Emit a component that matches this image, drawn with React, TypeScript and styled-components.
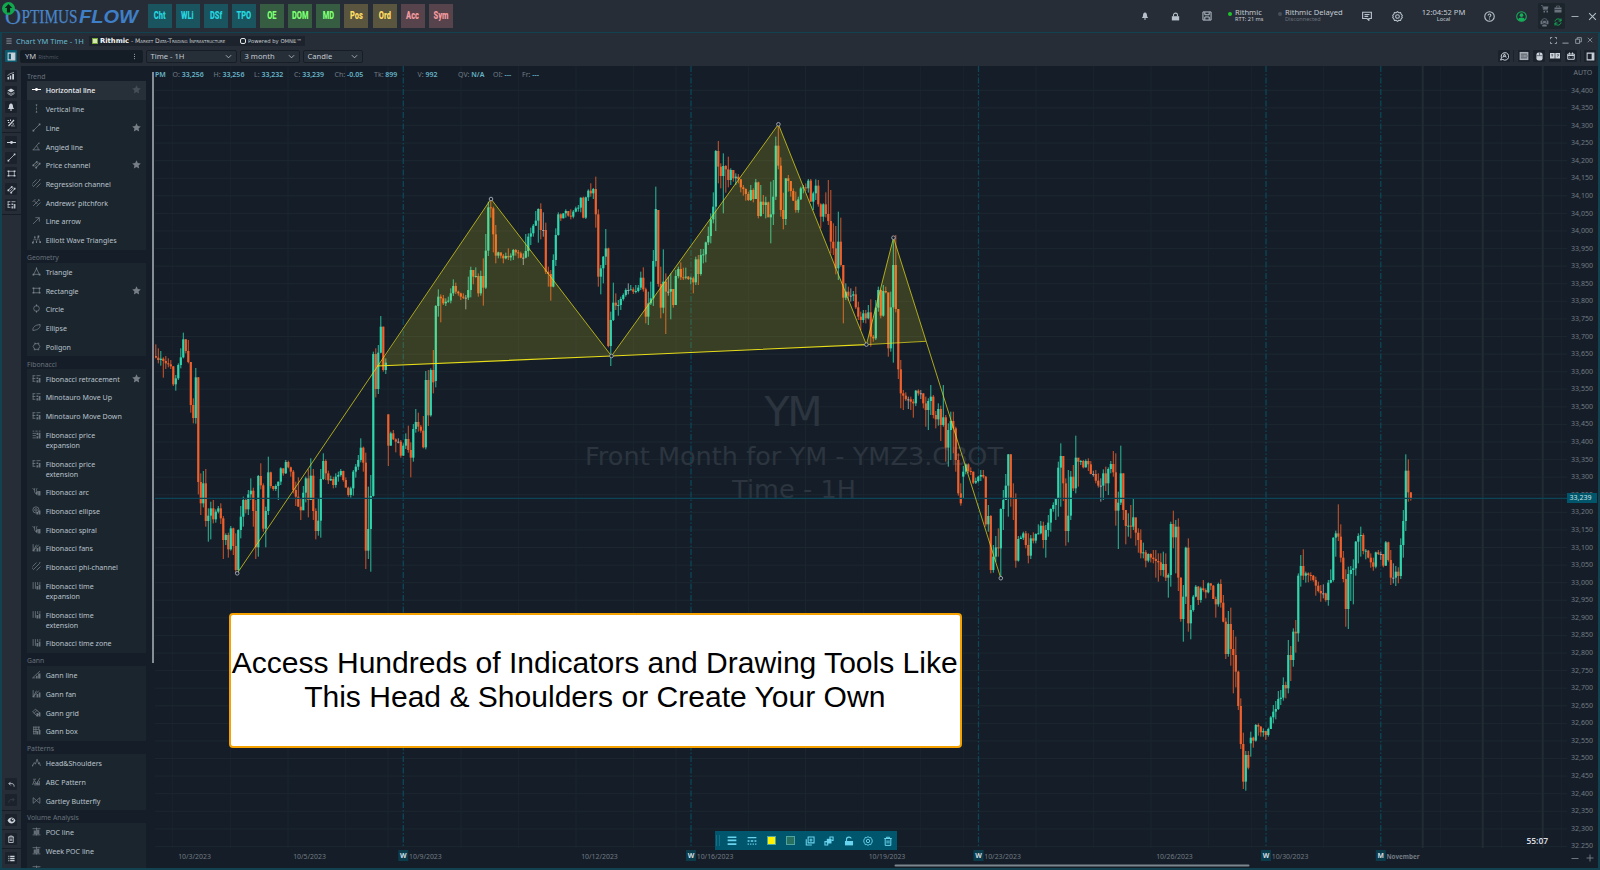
import React from 'react';
import styled, { createGlobalStyle } from 'styled-components';

type Bar = [number, number, number];

interface Block {
  top: number;
  open: number;
  bars: Bar[];
}

// Each bar is [close, high, low], in thirds of a pixel below the block's top.
// A bar opens where the previous one closed.
const BLOCKS: Block[] = [
  {
    top: 300,
    open: 168,
    bars: [
      [173,133,175],[180,145,190],[176,153,197],[183,172,233],[190,168,207],[193,175,202],[199,180,207],[253,198,258],
      [235,225,272],[195,190,240],[172,145,205],[118,98,175],[153,117,160],[186,120,190],[315,186,338],[354,295,370],
      [232,204,371],[546,231,583],[610,520,645],[550,513,622],[663,507,680],[647,625,725],[625,605,718],[658,600,670],
      [635,628,668],[625,618,640],[655,610,672],[720,648,777],[705,700,735],[748,698,773],[685,678,752],[738,683,765],
      [810,700,822],[690,688,815],[650,618,715],[600,590,680],[628,595,640],[583,570,645],[572,535,600],[633,563,680],
      [742,600,777],[528,525,770],[556,490,568],[686,550,695],[633,620,742],[517,470,645],[558,515,565],[567,558,572],
      [558,553,573],[545,545,600],[505,502,555],[520,505,527],[486,480,522],[502,482,505],[515,500,530],[570,510,580],
      [590,545,618],[620,532,620],[631,597,660],[578,558,630],[535,530,607],[600,508,652],[527,475,600],[633,507,660],
      [693,625,718],[662,594,707],[537,507,713],[483,460,540],[520,478,540],[541,512,552],[537,527,543],[555,530,565],
      [530,520,563],[525,515,545],[513,507,530],[540,512,545],[563,532,560],[585,560,590],[565,560,593],[515,510,587],
      [500,492,533],[480,465,510],[443,415,487],[488,440,515],[752,458,807],[687,560,777],[588,525,815],[162,155,590],
      [267,145,292],[158,135,282],[80,48,160],[210,80,215],[188,175,222],
    ],
  },
  {
    top: 300,
    open: 343,
    bars: [
      [437,343,498],[400,395,437],[418,390,420],[425,415,457],[425,415,430],[467,420,473],[437,430,468],[417,400,447],
      [450,377,458],[473,427,532],[387,372,485],[366,327,398],[380,338,395],[392,375,398],[442,348,445],[240,213,448],
      [346,210,378],[210,205,350],[247,150,280],
    ],
  },
  {
    top: 150,
    open: 693,
    bars: [
      [468,465,712],[440,418,500],[445,433,517],[460,435,465],[455,445,468],[452,440,458],[430,415,460],[408,388,438],
      [425,398,432],[430,422,437],[440,428,450],[443,430,447],[443,435,478],[420,380,450],[360,350,442],[380,360,403],
      [378,352,383],[430,370,440],[378,362,437],[413,325,467],[302,252,417],[172,155,318],[175,148,203],[253,170,307],
      [317,225,340],[307,305,325],[317,310,325],[325,312,340],[318,308,328],[322,295,330],[317,310,332],[300,297,330],
      [307,297,317],[310,300,325],[323,305,325],[323,310,345],[303,252,325],[260,250,320],[250,233,285],[227,222,260],
      [212,183,228],[177,175,278],[240,160,268],[240,187,260],[365,218,372],[372,350,410],[410,360,452],[330,313,412],
      [255,235,348],[193,187,257],[205,190,213],[190,190,205],[183,178,203],[197,185,200],[200,178,208],[185,180,205],
      [175,170,187],[173,165,185],[143,142,187],[203,140,205],[142,140,207],[122,118,153],[130,100,140],[117,114,147],
      [193,80,233],[380,178,410],[355,345,433],[320,318,400],[295,237,345],[588,293,592],[510,485,648],[458,398,513],
      [467,430,480],[465,450,497],[447,440,480],[435,430,452],[420,415,440],[420,400,433],[418,405,420],[425,412,432],
      [423,405,430],[413,405,427],[383,365,420],[418,352,425],[500,413,520],[460,425,525],[445,395,465],[333,300,468],
      [177,110,350],
    ],
  },
  {
    top: 100,
    open: 330,
    bars: [
      [552,330,560],[623,500,655],[545,448,640],[575,520,702],[575,530,587],[567,520,658],[615,568,623],[528,510,593],
      [507,500,535],[532,487,540],[533,503,540],[530,503,538],[537,528,540],[535,530,553],[547,530,580],[478,470,555],
      [522,465,555],[465,447,527],[463,447,490],[427,425,487],[408,380,435],[358,340,430],[320,277,370],[153,150,393],
      [200,123,250],[228,190,265],[198,160,340],[208,195,278],[240,170,262],[210,205,255],[235,210,245],[230,220,255],
      [238,222,250],[262,237,277],[267,255,287],[282,265,302],[300,275,303],[270,255,303],[297,265,307],[247,237,297],
      [348,245,355],[305,255,350],[315,285,342],[307,290,355],[352,305,350],[343,245,430],[290,240,375],[137,110,300],
      [197,78,208],[330,172,350],[357,278,388],[235,235,375],[243,225,275],[273,263,290],[302,265,303],[330,275,338],
      [298,290,338],[265,260,300],[262,255,280],[265,250,273],[242,237,278],[305,237,305],[280,275,330],[257,238,300],
      [313,240,320],[350,310,385],[313,310,365],[342,277,352],[363,240,375],[425,270,460],[445,370,465],[505,378,523],
      [425,335,540],[495,353,500],[593,495,670],[575,550,600],[587,560,602],[587,565,605],[583,573,603],[622,560,627],
      [650,605,660],[660,635,690],[640,630,668],[655,630,670],[637,615,658],[710,598,740],[715,705,725],[623,600,720],
      [570,560,635],[647,568,655],[573,555,650],[577,560,580],[745,580,770],[622,575,755],[495,413,788],[627,405,637],
      [808,627,837],
    ],
  },
  {
    top: 330,
    open: 118,
    bars: [
      [190,90,235],[197,180,240],[208,187,213],[208,200,237],[215,200,240],[220,207,263],[182,180,228],[190,178,197],
      [190,180,207],[220,190,235],[240,200,290],[213,205,300],[200,165,255],[255,195,265],[268,243,295],[237,220,287],
      [285,227,333],[262,165,290],[353,255,395],[300,280,410],[273,245,390],[295,245,370],[390,290,425],[490,370,497],
      [520,460,527],
    ],
  },
  {
    top: 330,
    open: 440,
    bars: [
      [425,408,507],[403,400,433],[423,400,430],[425,412,435],[458,425,462],[453,443,462],[440,437,457],[435,420,453],
      [440,420,445],[583,438,590],[558,525,605],[720,555,730],[680,645,728],[652,618,695],[655,595,680],[537,535,745],
      [510,480,600],[467,432,510],[373,372,560],[503,372,530],[507,460,570],[692,490,713],[627,618,695],[623,617,627],
      [610,605,630],[645,603,655],[677,610,700],[625,615,687],[632,607,640],[612,610,640],[610,583,613],[587,573,613],
      [630,575,655],[600,585,683],[578,555,620],[537,535,605],[525,517,545],[507,505,570],[413,395,560],[378,340,530],
      [460,378,513],[603,445,647],[557,420,637],[440,423,570],[475,405,483],[383,317,490],[395,390,470],[393,390,405],
      [412,390,415],[393,388,413],[403,385,423],[432,393,433],[432,422,440],[452,420,460],[467,430,473],[467,445,515],
      [430,418,510],[460,410,483],[417,412,495],[402,393,430],[427,363,440],[542,370,587],[518,485,657],[430,347,525],
      [540,430,570],[588,545,643],[587,550,620],[590,525,625],[562,507,600],
    ],
  },
  {
    top: 430,
    open: 262,
    bars: [
      [308,272,347],[330,295,368],[370,298,385],[367,338,385],[392,360,412],[372,370,397],[383,370,397],[387,360,400],
      [393,360,443],[397,370,455],[420,370,437],[402,365,440],[443,370,453],[435,430,503],[282,275,470],[322,242,355],
      [290,270,430],[443,265,483],[567,442,575],[500,465,635],[353,350,522],[580,325,605],[540,525,628],[500,495,545],
      [470,465,502],[510,468,525],[475,470,518],[480,450,485],[487,475,505],[460,457,490],[467,460,480],[507,465,507],
      [523,500,563],[462,458,530],[518,448,533],[575,495,577],[672,563,687],[582,543,680],[657,533,707],[675,600,790],
      [725,620,772],[828,722,840],[942,805,957],[1055,908,1077],[975,963,1082],[1013,963,1018],
    ],
  },
  {
    top: 430,
    open: 940,
    bars: [
      [923,905,980],[932,920,953],[885,882,935],[890,880,917],[907,888,920],[903,895,920],[915,903,930],[897,893,920],
      [862,858,897],[845,825,880],[837,813,868],[807,783,840],[803,780,825],[765,742,812],[775,755,805],[675,630,790],
      [690,648,753],[605,595,710],[610,570,668],[437,430,635],[408,375,470],[437,358,450],[430,425,458],[435,427,457],
      [437,427,452],[450,435,455],[467,440,497],[483,455,487],[490,465,515],[490,463,505],[510,488,515],[458,450,527],
      [450,418,460],[323,322,455],[310,302,380],[320,223,333],[383,283,397],[447,363,457],[537,418,590],[432,410,597],
      [420,408,513],[415,388,523],[335,333,437],[318,310,400],[315,290,380],[363,310,373],[362,357,388],[383,360,385],
      [397,370,413],[410,383,422],[367,365,415],[372,360,375],[372,365,390],[407,375,412],[337,333,408],[390,335,395],
      [443,360,465],[443,400,460],[425,408,468],[438,412,460],[345,325,447],[273,240,383],[122,73,303],[187,88,215],
      [205,187,212],
    ],
  },
];

const FIRST_BAR_X = 155.8;
const BAR_STEP = 2.5;
const PRICE_STEP_PX = 17.585;
const TOP_PRICE = 34400;
const TOP_PRICE_Y = 90.3;

const UP = '#2fd6ae';
const DOWN = '#f0602c';
const FLAT = '#a3a9ad';

const UI_FONT = '"Noto Sans", "Open Sans", sans-serif';

const candles = (() => {
  let index = 0;
  return BLOCKS.flatMap(({ top, open, bars }) => {
    let previous = open;
    return bars.map(([close, high, low]) => {
      const from = previous;
      previous = close;
      const color = close > from ? DOWN : close < from ? UP : FLAT;
      return {
        x: FIRST_BAR_X + BAR_STEP * index++,
        bodyTop: top + Math.min(from, close) / 3,
        bodyHeight: Math.max(Math.abs(close - from) / 3, 1),
        high: top + high / 3,
        low: top + low / 3,
        color,
      };
    });
  });
})();

const prices = Array.from({ length: 44 }, (_, i) => TOP_PRICE - i * 50);

const GlobalStyle = createGlobalStyle`
  * {
    box-sizing: border-box;
  }

  body {
    margin: 0;
    overflow: hidden;
    background: #262d37;
  }
`;

/* ---------- icons ---------- */

const ICONS: Record<string, React.ReactNode> = {
  hlineDot: (
    <>
      <path d="M0 8h16" strokeWidth="1.8" />
      <circle cx="8" cy="8" r="2.6" fill="currentColor" stroke="none" />
    </>
  ),
  vline: <path d="M8 1v3M8 6v4M8 12v3M6.5 1.5h3M6.5 14.5h3" />,
  line: (
    <>
      <path d="M3 13L13 3" />
      <path d="M1 12h3v3H1zM12 1h3v3h-3z" fill="currentColor" stroke="none" />
    </>
  ),
  angled: <path d="M1 14h13M2 14L12 2M8 7c2 1 3 4 3 7M11 2h3" />,
  channel: (
    <>
      <path d="M2 9.500L8.500 3M7 13.500l7-7" strokeWidth="1.700" />
      <path d="M1 8h3v3H1zM7 2h3v3H7zM6 12h3v3H6zM12 5h3v3h-3z" fill="currentColor" stroke="none" />
      <path d="M4.500 11.500l7-7" strokeWidth="1" />
    </>
  ),
  regression: <path d="M1 8L8 1M2 14L14 2M8 15l7-7M1 10v2M13 1h2" />,
  pitchfork: <path d="M1 7l5-5M2 14L13 3M8 15l7-7M4 5l6 6M11 2l3 3" />,
  arrow: <path d="M2 14L13 3M6 3h7v7" />,
  elliott: (
    <>
      <path d="M2 13l3-9 3 8 3-9 3 9" strokeDasharray="3 1" />
      <path d="M0 12h3v3H0zM4 2h2v3H4zM7 11h2v3H7zM10 1h3v3h-3zM13 11h3v3h-3z" fill="currentColor" stroke="none" />
    </>
  ),
  triangle: (
    <>
      <path d="M8 3L3 13h10z" />
      <path d="M7 1h2v3H7zM1 12h3v3H1zM12 12h3v3h-3z" fill="currentColor" stroke="none" />
    </>
  ),
  rect: (
    <>
      <path d="M3 4h10v8H3z" />
      <path d="M1 2.500h3v3H1zM12 2.500h3v3h-3zM1 10.500h3v3H1zM12 10.500h3v3h-3z" fill="currentColor" stroke="none" />
    </>
  ),
  circle: (
    <>
      <circle cx="8" cy="8" r="5" />
      <path d="M7 1h2v3H7zM7 12h2v3H7z" fill="currentColor" stroke="none" />
    </>
  ),
  ellipse: <path d="M2 13c-2-4 3-10 12-10 2 4-3 10-12 10zM1 13h2M13 3h2" />,
  polygon: <path d="M5 3h6l3 5-3 5H5L2 8zM4 2h2v2M10 2h2v2M4 12v2h2M12 12v2h-2" />,
  fib: (
    <>
      <path d="M1 3h5M8 3h7M1 8h5M1 13h5M2 3v10" />
      <path d="M8 6h3v3H8zM8 11h3v4H8zM12 7h3v8h-3z" fill="currentColor" stroke="none" opacity=".85" />
    </>
  ),
  fibTop: (
    <>
      <path d="M1 2h3M6 2h4M12 2h3M1 6h6M1 10h6M1 14h6" />
      <path d="M8 5h3v4H8zM8 11h3v4H8zM12 5h3v10h-3z" fill="currentColor" stroke="none" opacity=".85" />
    </>
  ),
  fibArc: (
    <>
      <path d="M1 2l4 4M5 2c-2 5 0 10 5 12M9 2c-2 3-1 6 2 8" />
      <path d="M7 8h3v5H7zM11 7h4v8h-4z" fill="currentColor" stroke="none" opacity=".85" />
    </>
  ),
  fibEllipse: (
    <>
      <circle cx="7" cy="7" r="5.5" />
      <circle cx="7" cy="7" r="2.2" />
      <path d="M8 10h3v5H8zM12 8h3v7h-3z" fill="currentColor" stroke="none" opacity=".85" />
    </>
  ),
  fibFan: (
    <>
      <path d="M2 2v12M2 14L8 3M2 14l10-11M1 14h5" />
      <path d="M8 9h3v6H8zM12 6h3v9h-3z" fill="currentColor" stroke="none" opacity=".85" />
    </>
  ),
  fibTime: (
    <>
      <path d="M2 2v12M6 2v12M10 2v5M14 2v3" />
      <path d="M8 9h3v6H8zM12 6h3v9h-3z" fill="currentColor" stroke="none" opacity=".85" />
    </>
  ),
  gannLine: (
    <>
      <path d="M1 14L14 2M1 14h5" />
      <path d="M7 10h3v5H7zM11 6h4v9h-4z" fill="currentColor" stroke="none" opacity=".85" />
    </>
  ),
  gannGrid: (
    <>
      <path d="M1 7l5-5 8 7-5 5zM4 9l5-5" />
      <path d="M8 9h3v6H8zM12 8h3v7h-3z" fill="currentColor" stroke="none" opacity=".85" />
    </>
  ),
  gannBox: (
    <>
      <path d="M2 2h12M2 6h12M2 10h6M2 14h5M3 1v13M7 1v13M12 1v5" />
      <path d="M8 9h3v6H8zM12 7h3v8h-3z" fill="currentColor" stroke="none" opacity=".85" />
    </>
  ),
  head: <path d="M1 14l3-6 2 3 3-9 3 9 1-3 2 6M1 12v3" />,
  abc: <path d="M1 14l3-8 4 6 6-10M2 4h5M10 8v6M13 7v7M3 12h10M4 14h10" />,
  gartley: <path d="M2 13V3l6 5 6-5v10L8 8z" />,
  poc: (
    <>
      <path d="M1 14h14M1 3h14M8 1v14" />
      <path d="M3 6h4v7H3zM9 5h4v8H9z" fill="currentColor" stroke="none" opacity=".8" />
    </>
  ),
  bars: (
    <>
      <path d="M1 10h3v5H1zM5.5 7h3v8h-3zM10.500 4h3.500v11h-3.500z" fill="currentColor" stroke="none" />
      <path d="M1 7l6-4 7-2" />
    </>
  ),
  layers: (
    <>
      <path d="M8 1l7 4-7 4-7-4z" fill="currentColor" stroke="none" />
      <path d="M1 8.5l7 4 7-4M1 11l7 4 7-4" />
    </>
  ),
  bell: <path d="M8 1c-3 0-4 3-4 6 0 3-2 3-2 5h12c0-2-2-2-2-5 0-3-1-6-4-6zM6 13h4v2H6z" fill="currentColor" stroke="none" />,
  wand: (
    <>
      <path d="M3 14L14 2" strokeWidth="2.400" />
      <path d="M1 2h3v2H1zM6 1h2v3H6zM2 6h3v2H2zM11 9h3v2h-3zM9 12h2v3H9zM13 13h2v2h-2z" fill="currentColor" stroke="none" />
    </>
  ),
  undo: <path d="M6 2L2 6l4 4M2 6h7c4 0 5 3 5 7" strokeWidth="1.8" />,
  redo: <path d="M10 2l4 4-4 4M14 6H7c-4 0-5 3-5 7" strokeWidth="1.8" />,
  eye: (
    <>
      <path d="M1 8c3-7 11-7 14 0-3 7-11 7-14 0z" fill="currentColor" stroke="none" />
      <circle cx="9" cy="7" r="3" fill="#262d37" stroke="none" />
      <circle cx="10" cy="6" r="1.3" fill="currentColor" stroke="none" />
    </>
  ),
  trash: <path d="M2 4h12M5.500 4V2h5v2M3.500 4v11h9V4M6.500 7v5M9.500 7v5" strokeWidth="1.6" />,
  list: <path d="M1 3h2M1 8h2M1 13h2M5 3h10M5 8h10M5 13h10" strokeWidth="3" />,
  lock: (
    <>
      <path d="M1.500 8h13v7h-13z" fill="currentColor" stroke="none" />
      <path d="M4 8V5c0-4 7-4 7.500-1" strokeWidth="1.8" />
    </>
  ),
  padlock: (
    <>
      <path d="M1.500 7.500h13v7.500h-13z" fill="currentColor" stroke="none" />
      <path d="M4.500 8V5c0-4 7-4 7 0v3" strokeWidth="1.8" />
    </>
  ),
  save: <path d="M1.500 1.500h13v13h-13zM4.500 2v4h7V2M4.500 14V9.500h7V14" strokeWidth="1.600" />,
  chat: <path d="M1 2h14v10h-4v3l-3-3H1zM4 5.500h8M4 8.500h6" strokeWidth="1.800" />,
  gear: (
    <>
      <path d="M8 1l2 1.500 2.500-.3.800 2.400L15 6.500 14.200 8l.8 1.500-1.700 1.900-.8 2.400-2.500-.3L8 15l-2-1.500-2.500.3-.8-2.400L1 9.500 1.800 8 1 6.500l1.700-1.900.8-2.400 2.500.3z" strokeWidth="1.500" />
      <circle cx="8" cy="8" r="2.700" strokeWidth="1.500" />
    </>
  ),
  help: (
    <>
      <circle cx="8" cy="8" r="6.900" strokeWidth="1.600" />
      <path d="M6 6.500C6 3.500 10 4 10 6.300 10 8 8 7.800 8 9.500M8 11v1.500" strokeWidth="1.600" />
    </>
  ),
  user: (
    <>
      <circle cx="8" cy="8" r="7" strokeWidth="1.500" />
      <circle cx="8" cy="6" r="2.600" fill="currentColor" stroke="none" />
      <path d="M3 12.500c1-4 9-4 10 0-3 3-7 3-10 0z" fill="currentColor" stroke="none" />
    </>
  ),
  cart: (
    <>
      <path d="M0 1h3l2 9h9" />
      <path d="M4 3h11l-2 6H5zM5 12h3v3H5zM11 12h3v3h-3z" fill="currentColor" stroke="none" />
    </>
  ),
  bag: (
    <>
      <path d="M1 5h14v10H1z" fill="currentColor" stroke="none" />
      <path d="M5 5V2h6v3" />
      <path d="M1 9h14" stroke="#1c242c" />
    </>
  ),
  agent: (
    <>
      <circle cx="8" cy="6" r="5" />
      <path d="M1 5h3v6H1zM12 5h3v6h-3zM4 12h8v3H4zM5.500 5h5v4h-5z" fill="currentColor" stroke="none" />
    </>
  ),
  refresh: <path d="M2 7c1-6 9-7 12-2M14 1v5H9M14 9c-1 6-9 7-12 2M2 15v-5h5" strokeWidth="1.800" />,
  minus: <path d="M1 9h14" strokeWidth="1.700" />,
  low: <path d="M1 14h14" strokeWidth="2" />,
  plus: <path d="M1 8h14M8 1v14" strokeWidth="1.700" />,
  close: <path d="M2 2l12 12M14 2L2 14" strokeWidth="1.800" />,
  full: <path d="M1 5V1h4M11 1h4v4M15 11v4h-4M5 15H1v-4" strokeWidth="2" />,
  restore: <path d="M1.500 5h9v9.500h-9zM5 5V1.500h9.500V11H10.500" strokeWidth="1.800" />,
  menu: <path d="M1 2h14M1 8h14M1 14h14" strokeWidth="2" />,
  caret: <path d="M2 5l6 6 6-6" strokeWidth="1.800" />,
  dots: <path d="M8 2v2M8 7v2M8 12v2" strokeWidth="2" />,
  panelLeft: (
    <>
      <path d="M2 2h12v12H2z" strokeWidth="1.800" />
      <path d="M7 2h7v12H7z" fill="currentColor" stroke="none" />
    </>
  ),
  panelRight: (
    <>
      <path d="M2 2h12v12H2z" strokeWidth="1.800" />
      <path d="M10 2h4v12h-4z" fill="currentColor" stroke="none" />
    </>
  ),
  search: (
    <>
      <path d="M2.500 14.500L4 11A6 6 0 1 1 6 13.500z" strokeWidth="1.600" />
      <path d="M6 10.500l2.800-6 2.700 6M7 8.500h3.500" strokeWidth="1.500" />
    </>
  ),
  table: (
    <>
      <path d="M1 1.500h14v13H1z" fill="currentColor" stroke="none" opacity=".8" />
      <path d="M3 5h10M3 8h6M3 11h10M10 8h4" stroke="#262d37" strokeWidth="1.100" />
    </>
  ),
  mouse: (
    <>
      <rect x="2.500" y="1" width="11" height="14" rx="4" fill="currentColor" stroke="none" />
      <path d="M8 1v5M3 6.500h10" stroke="#262d37" strokeWidth="1" />
    </>
  ),
  tags: (
    <>
      <path d="M0 3h7.500v9H0zM8.500 3H16v9H8.500z" fill="currentColor" stroke="none" />
      <path d="M2 6h3M3.500 6v3M11 6h3l-2 3" stroke="#262d37" strokeWidth="1" />
    </>
  ),
  calendar: <path d="M1.500 4h13v10.500h-13zM1.500 7h13M5 1v4M11 1v4M5 10.500h1M10 10.500h1" strokeWidth="2" />,
  thickness: <path d="M1 2h14M1 7h14M1 13h14" strokeWidth="2.600" />,
  dashes: <path d="M1 2.500h14M1 8h3M6 8h4M12 8h3M1 13h2M5 13h2M9 13h2M13 13h2" strokeWidth="2.200" />,
  copy: <path d="M5 1.500h9.500V11H5zM2 5v9.500h9M9.500 4v5M7 6.500h5" strokeWidth="1.700" />,
  order: (
    <>
      <path d="M4.500 4.500H12V12H4.500z" fill="currentColor" stroke="none" />
      <path d="M9.500 5V1.500h5V7H12M6 11v3.500H1.500V9H5" strokeWidth="1.700" />
    </>
  ),
  star: <path d="M8 .5l2.300 4.900 5.300.7-3.900 3.700 1 5.300L8 12.500l-4.700 2.600 1-5.300L.4 6.100l5.300-.7z" fill="currentColor" stroke="none" />,
};

const Svg = styled.svg<{ $size: number }>`
  display: block;
  flex: none;
  width: ${props => props.$size}px;
  height: ${props => props.$size}px;
  fill: none;
  stroke: currentColor;
  stroke-width: 1.3;
`;

const Icon: React.FC<{ name: string; size?: number }> = ({ name, size = 9 }) => (
  <Svg $size={size} viewBox="0 0 16 16">
    {ICONS[name]}
  </Svg>
);

/* ---------- top bar ---------- */

const Screen = styled.div`
  width: 1600px;
  height: 870px;
  display: flex;
  flex-direction: column;
  overflow: hidden;
  background: #262d37;
  color: #c3cad2;
  font-family: ${UI_FONT};
  font-size: 7.5px;
  line-height: 10px;
`;

const TopBar = styled.header`
  flex: none;
  height: 32px;
  display: flex;
  align-items: center;
`;

const Logo = styled.svg`
  display: block;
  flex: none;
  width: 147.5px;
  height: 32px;
`;

const Shortcuts = styled.nav`
  display: flex;
  gap: 4.15px;
`;

const tones = {
  teal: ['#1a545e', '#25d6e0'],
  green: ['#365c41', '#7dff72'],
  yellow: ['#59553f', '#ffdc62'],
  red: ['#57434c', '#f59a9f'],
};

const Shortcut = styled.div<{ $tone: keyof typeof tones }>`
  width: 24px;
  height: 24px;
  margin-top: -1px;
  display: flex;
  align-items: center;
  justify-content: center;
  background: ${props => tones[props.$tone][0]};
  color: ${props => tones[props.$tone][1]};
  font: 900 11px Roboto, sans-serif;

  span {
    transform: scaleX(0.68);
  }
`;

const Cell = styled.div<{ $width: number; $color?: string }>`
  flex: none;
  width: ${props => props.$width}px;
  display: flex;
  justify-content: center;
  color: ${props => props.$color || '#b7c1cc'};
`;

const Spacer = styled.div`
  flex: 1;
`;

const Connection = styled.div<{ $width: number }>`
  flex: none;
  width: ${props => props.$width}px;
  display: flex;
  gap: 3px;
  padding-left: 5px;
`;

const Dot = styled.i<{ $color: string }>`
  width: 4px;
  height: 4px;
  margin-top: 2px;
  border-radius: 50%;
  background: ${props => props.$color};
`;

const Stack = styled.div<{ $center?: boolean }>`
  text-align: ${props => (props.$center ? 'center' : 'left')};
  white-space: nowrap;
  font-size: 7.6px;
  line-height: 7px;
  margin-top: -0.5px;
  color: #c3cad2;
`;

const Small = styled.div<{ $dim?: boolean }>`
  font-size: 5.6px;
  line-height: 6px;
  color: ${props => (props.$dim ? '#69717b' : '#c3cad2')};
`;

const Cluster = styled.div`
  flex: none;
  width: 27px;
  height: 26px;
  display: grid;
  grid-template-columns: 1fr 1fr;
  place-items: center;
  border-radius: 2px;
  background: #1c242c;
  color: #6a737d;
`;

const Green = styled.span`
  color: #17b65a;
`;

/* ---------- chart window ---------- */

const Window = styled.section`
  flex: 1;
  min-height: 0;
  display: flex;
  flex-direction: column;
  border: solid #12414f;
  border-width: 1px 2px 2px 2px;
`;

const TitleRow = styled.div`
  flex: none;
  height: 15px;
  display: flex;
  align-items: center;
  padding: 0 4px 0 4px;
  color: #a5aeb8;
`;

const WindowTitle = styled.span`
  width: 73px;
  margin-left: 4px;
  color: #66b9cf;
  font-size: 7.5px;
  white-space: nowrap;
`;

const Powered = styled.div`
  display: flex;
  align-items: center;
  gap: 2px;
  width: 216px;
  height: 10px;
  padding: 0 3px;
  background: #1c232c;
  color: #c8ccd0;
  font: 5.3px/10px "DejaVu Sans", sans-serif;
  white-space: nowrap;

  b {
    width: 29px;
    font-size: 6.8px;
    color: #f1f4f6;
  }

  em {
    width: 107px;
    font-style: normal;
    font-variant: small-caps;
    font-size: 6.1px;
    letter-spacing: -0.05px;
  }
`;

const RithmicMark = styled.i`
  width: 6px;
  height: 6px;
  border: 1.5px solid #77a33b;
  background: #d7e8b5;
`;

const OmneMark = styled.i`
  width: 6px;
  height: 6px;
  border: 1.3px solid #dfe3e6;
  border-radius: 2px;
`;

const WindowButtons = styled.div`
  display: flex;
  gap: 5.500px;
  margin-right: 1px;
`;

const ToolRow = styled.div`
  flex: none;
  height: 18px;
  display: flex;
  align-items: center;
  padding: 0 2px 2px 3px;
`;

const ToolButton = styled.div<{ $active?: boolean; $dim?: boolean }>`
  flex: none;
  width: 12px;
  height: 12px;
  display: flex;
  align-items: center;
  justify-content: center;
  border-radius: 1px;
  background: ${props => (props.$active ? '#075a70' : '#1b222b')};
  color: ${props => (props.$dim ? '#3c444d' : '#ccd2d9')};
`;

const Field = styled.div<{ $width: number; $dark?: boolean }>`
  flex: none;
  width: ${props => props.$width}px;
  height: 13px;
  display: flex;
  align-items: center;
  justify-content: space-between;
  margin-left: 3px;
  padding: 0 4px;
  border: 1px solid #171d25;
  border-radius: 2px;
  background: ${props => (props.$dark ? '#141c25' : '#262e38')};
  color: #c3cad2;
  font-size: 7.6px;

  small {
    color: #515a64;
    font-size: 5.8px;
  }
`;

const RightTools = styled.div`
  display: flex;
  gap: 3.7px;
  margin-left: auto;
`;

const ToolDivider = styled.i`
  width: 1px;
  height: 12px;
  margin: 0 -0.5px;
  background: #1b222b;
`;

const Content = styled.div`
  flex: 1;
  min-height: 0;
  display: flex;
  background: #151e28;
`;

const Rail = styled.aside`
  flex: none;
  width: 18.5px;
  display: flex;
  flex-direction: column;
  align-items: center;
  background: #262d37;
`;

const RailGroup = styled.div<{ $top: number; $bottom?: number }>`
  width: 100%;
  display: flex;
  flex-direction: column;
  align-items: center;
  gap: 3.7px;
  padding: ${props => props.$top}px 0 ${props => props.$bottom ?? 3}px;
  border-bottom: 1px solid #171d25;

  &:last-child {
    border-bottom: 0;
  }
`;

const Panel = styled.aside`
  flex: none;
  width: 129.5px;
  overflow: hidden;
  padding: 2px 4px 0 6.5px;
`;

const GroupName = styled.div`
  height: 13.1px;
  padding-top: 2.5px;
  line-height: 11px;
  font-size: 6.8px;
  color: #69727c;
`;

const Group = styled.div`
  background: #1b252e;
`;

const Item = styled.div<{ $selected?: boolean }>`
  display: flex;
  align-items: flex-start;
  padding: 4.37px 5px;
  background: ${props => (props.$selected ? '#272f38' : 'transparent')};
  color: ${props => (props.$selected ? '#f0f4f7' : '#b9c3cb')};
  font-size: 7.1px;
  font-weight: ${props => (props.$selected ? 500 : 400)};
  line-height: 10px;

  > svg:first-child {
    color: ${props => (props.$selected ? '#ffffff' : '#78828b')};
  }
`;

const ItemLabel = styled.span`
  width: 86px;
  margin-left: 4.7px;
  white-space: pre;
`;

const Star = styled.span<{ $dim?: boolean }>`
  margin-left: auto;
  color: ${props => (props.$dim ? '#454d56' : '#767d85')};
`;

const PanelScroll = styled.div`
  flex: none;
  width: 5px;
  padding: 6px 0 0 2px;

  i {
    display: block;
    width: 2px;
    height: 591px;
    background: #878d95;
  }
`;

const ChartArea = styled.main`
  position: relative;
  flex: 1;
  min-width: 0;
  display: flex;
`;

const Plot = styled.svg`
  display: block;
  flex: none;
  width: 1412px;
  height: 802px;
`;

const Quote = styled.div`
  position: absolute;
  top: 3.500px;
  left: 0;
  display: flex;
  font-size: 7px;
  line-height: 10px;
  color: #737c86;
`;

const QuoteItem = styled.span<{ $width: number }>`
  width: ${props => props.$width}px;
  white-space: nowrap;

  b {
    color: #67b4c8;
    font-weight: 600;
  }
`;

const PriceAxis = styled.div`
  position: relative;
  flex: 1;
  height: 782px;
  overflow: hidden;
  padding-left: 4px;
  font-size: 7px;
  color: #727a83;
`;

const Auto = styled.div`
  height: 15.5px;
  padding-left: 2.5px;
  line-height: 13px;
`;

const PriceLabel = styled.div`
  height: ${PRICE_STEP_PX}px;
  line-height: ${PRICE_STEP_PX}px;
`;

const LastPrice = styled.div`
  position: absolute;
  left: 0;
  top: 427px;
  width: 30px;
  height: 10px;
  padding-left: 2.5px;
  background: #00556b;
  color: #c9e2e9;
  line-height: 10px;
`;

const ZoomButtons = styled.div`
  position: absolute;
  right: 4px;
  bottom: 6px;
  display: flex;
  gap: 7px;
  color: #7c848d;
`;

const Callout = styled.div`
  position: absolute;
  left: 74px;
  top: 546.5px;
  width: 733px;
  height: 135px;
  display: flex;
  flex-direction: column;
  align-items: center;
  justify-content: center;
  padding-right: 1.5px;
  border: 2px solid #f5a100;
  border-radius: 4px;
  background: #fff;
  color: #000;
  font: 30.05px/34px "Liberation Sans", Arial, sans-serif;
  white-space: nowrap;
`;

const DrawingBar = styled.div`
  position: absolute;
  left: 560px;
  top: 765px;
  width: 182px;
  height: 19px;
  display: flex;
  align-items: center;
  gap: 9.4px;
  padding-left: 1px;
  background: #00566c;
  color: #69d3ee;
`;

const Grip = styled.i`
  width: 4px;
  height: 11px;
  margin-right: -2px;
  border: solid #126f86;
  border-width: 0 1px;
`;

const Swatch = styled.i<{ $color: string }>`
  width: 9px;
  height: 9px;
  margin: 0 0.5px;
  border: 1px solid #4fa4a0;
  background: ${props => props.$color};
`;

/* ---------- data ---------- */

const SHORTCUTS: [string, keyof typeof tones][] = [
  ['Cht', 'teal'],
  ['WLi', 'teal'],
  ['DSf', 'teal'],
  ['TPO', 'teal'],
  ['OE', 'green'],
  ['DOM', 'green'],
  ['MD', 'green'],
  ['Pos', 'yellow'],
  ['Ord', 'yellow'],
  ['Acc', 'red'],
  ['Sym', 'red'],
];

interface Tool {
  icon: string;
  label: string;
  star?: boolean;
}

const TOOLS: { name: string; items: Tool[] }[] = [
  {
    name: 'Trend',
    items: [
      { icon: 'hlineDot', label: 'Horizontal line', star: true },
      { icon: 'vline', label: 'Vertical line' },
      { icon: 'line', label: 'Line', star: true },
      { icon: 'angled', label: 'Angled line' },
      { icon: 'channel', label: 'Price channel', star: true },
      { icon: 'regression', label: 'Regression channel' },
      { icon: 'pitchfork', label: "Andrews' pitchfork" },
      { icon: 'arrow', label: 'Line arrow' },
      { icon: 'elliott', label: 'Elliott Wave Triangles' },
    ],
  },
  {
    name: 'Geometry',
    items: [
      { icon: 'triangle', label: 'Triangle' },
      { icon: 'rect', label: 'Rectangle', star: true },
      { icon: 'circle', label: 'Circle' },
      { icon: 'ellipse', label: 'Ellipse' },
      { icon: 'polygon', label: 'Poligon' },
    ],
  },
  {
    name: 'Fibonacci',
    items: [
      { icon: 'fib', label: 'Fibonacci retracement', star: true },
      { icon: 'fib', label: 'Minotauro Move Up' },
      { icon: 'fib', label: 'Minotauro Move Down' },
      { icon: 'fibTop', label: 'Fibonacci price\nexpansion' },
      { icon: 'fib', label: 'Fibonacci price\nextension' },
      { icon: 'fibArc', label: 'Fibonacci arc' },
      { icon: 'fibEllipse', label: 'Fibonacci ellipse' },
      { icon: 'fibArc', label: 'Fibonacci spiral' },
      { icon: 'fibFan', label: 'Fibonacci fans' },
      { icon: 'regression', label: 'Fibonacci phi-channel' },
      { icon: 'fibTime', label: 'Fibonacci time\nexpansion' },
      { icon: 'fibTime', label: 'Fibonacci time\nextension' },
      { icon: 'fibTime', label: 'Fibonacci time zone' },
    ],
  },
  {
    name: 'Gann',
    items: [
      { icon: 'gannLine', label: 'Gann line' },
      { icon: 'fibFan', label: 'Gann fan' },
      { icon: 'gannGrid', label: 'Gann grid' },
      { icon: 'gannBox', label: 'Gann box' },
    ],
  },
  {
    name: 'Patterns',
    items: [
      { icon: 'head', label: 'Head&Shoulders' },
      { icon: 'abc', label: 'ABC Pattern' },
      { icon: 'gartley', label: 'Gartley Butterfly' },
    ],
  },
  {
    name: 'Volume Analysis',
    items: [
      { icon: 'poc', label: 'POC line' },
      { icon: 'poc', label: 'Week POC line' },
      { icon: 'poc', label: 'Month POC line' },
    ],
  },
];

const QUOTE: [string, string, number][] = [
  ['', 'PM', 17.5],
  ['O:', '33,256', 41],
  ['H:', '33,256', 40.5],
  ['L:', '33,232', 40],
  ['C:', '33,239', 40.5],
  ['Ch:', '-0.05', 39.5],
  ['Tk:', '899', 43.5],
  ['V:', '992', 40.5],
  ['QV:', 'N/A', 35],
  ['OI:', '---', 29],
  ['Fr:', '---', 30],
];

const DAY_LINES = [172.7, 230.7, 288, 345.7, 388, 461, 518.3, 576, 633.3, 676, 748.3, 805.5, 863.3, 920.7, 963.7, 1036, 1093.3, 1151, 1208.3, 1251.7, 1323.3, 1440.7, 1501.7, 1561.7];
const MARGIN_LINES = [1422.7, 1482.7, 1542.7];
const PERIODS: [number, string, string][] = [
  [403.3, 'W', '10/9/2023'],
  [691, 'W', '10/16/2023'],
  [978.5, 'W', '10/23/2023'],
  [1266, 'W', '10/30/2023'],
  [1380.8, 'M', 'November'],
];
const DATES: [number, string][] = [
  [194.5, '10/3/2023'],
  [309.5, '10/5/2023'],
  [599.5, '10/12/2023'],
  [887, '10/19/2023'],
  [1174.5, '10/26/2023'],
];
const PATTERN = [
  [237.2, 573.3],
  [491, 199],
  [611.5, 356],
  [778.4, 124.3],
  [866.4, 344.6],
  [893.5, 237.7],
  [1000.8, 578.2],
];

const Chart: React.FC = () => (
  <Plot viewBox="155 66 1412 802">
    <g stroke="#1c2730">
      {prices.map((price, i) => (
        <path key={price} d={`M155 ${TOP_PRICE_Y + i * PRICE_STEP_PX}H1567`} />
      ))}
      {DAY_LINES.map(x => (
        <path key={x} d={`M${x} 66V848`} opacity=".8" />
      ))}
      {MARGIN_LINES.map(x => (
        <path key={x} d={`M${x} 66V848`} stroke="#212b34" strokeWidth="2" />
      ))}
    </g>
    <g fill="#2c353f" fontFamily='"DejaVu Sans", sans-serif' textAnchor="middle">
      <text x="793.5" y="425.5" fontSize="41" textLength="58">YM</text>
      <text x="794" y="465" fontSize="25.5" textLength="418">Front Month for YM - YMZ3.CBOT</text>
      <text x="794" y="498" fontSize="25.5" textLength="124">Time - 1H</text>
    </g>
    {PERIODS.map(([x]) => (
      <path key={x} d={`M${x} 66V848`} stroke="#0c4658" strokeWidth="1.3" strokeDasharray="6 2 1.5 2" />
    ))}
    {candles.map(c => (
      <g key={c.x} fill={c.color}>
        <rect x={c.x - 0.5} y={c.high} width="1" height={c.low - c.high} opacity=".85" />
        <rect x={c.x - 1.1} y={c.bodyTop} width="2.2" height={c.bodyHeight} />
      </g>
    ))}
    <path d="M155 498.4H1567" stroke="#0b4557" strokeWidth="1.2" />
    <g fill="#fff01a" fillOpacity=".155">
      <path d="M378.5 366L491 199L611.5 356z" />
      <path d="M611.5 356L778.4 124.3L866.4 344.6z" />
      <path d="M866.4 344.6L893.5 237.7L926 341.3z" />
    </g>
    <g fill="none" stroke="#e6dc1a">
      <polyline points={PATTERN.map(p => p.join(',')).join(' ')} strokeWidth=".9" opacity=".8" />
      <path d="M377 366L611.5 356L866.4 344.6" strokeWidth="1.1" />
      <path d="M866.4 344.6L926 341.3" strokeWidth=".9" opacity=".8" />
    </g>
    {PATTERN.map(([x, y]) => (
      <circle key={x} cx={x} cy={y} r="1.8" fill="#151e28" stroke="#9aa3ad" />
    ))}
    <g fill="#727a83" fontFamily={UI_FONT} fontSize="6.9">
      {DATES.map(([x, label]) => (
        <text key={x} x={x} y="858.6" textAnchor="middle">{label}</text>
      ))}
      {PERIODS.map(([x, mark, label]) => (
        <g key={x}>
          <rect x={x - 5} y="850" width="10" height="11" fill="#0a3c4c" />
          <text x={x} y="858.3" textAnchor="middle" fontWeight="700" fontSize="6.8" fill="#d1dde2">{mark}</text>
          <text x={x + 5.7} y="858.6" fontWeight={mark === 'M' ? 700 : 400} fontSize={mark === 'M' ? 6.3 : 6.9}>{label}</text>
        </g>
      ))}
    </g>
    <text x="1537.3" y="844" fill="#d5dae0" fontFamily={UI_FONT} fontWeight="600" fontSize="8.5" textAnchor="middle">55:07</text>
    <rect x="894.5" y="864.5" width="355" height="2" rx="1" fill="#7d858e" />
  </Plot>
);

const App: React.FC = () => {
  return (
    <Screen>
      <GlobalStyle />
      <TopBar>
        <Logo viewBox="0 0 147.5 32">
          <g fill="#4a86c8" stroke="#4a86c8" strokeWidth=".25" fontFamily='"Liberation Serif", serif'>
            <text x="5" y="23.5" fontSize="24" textLength="16" lengthAdjust="spacingAndGlyphs">O</text>
            <text x="21.5" y="22.5" fontSize="19" textLength="56" lengthAdjust="spacingAndGlyphs">PTIMUS</text>
          </g>
          <text x="79" y="22.5" fill="#3f7fc8" fontFamily='"Liberation Sans", sans-serif' fontWeight="700" fontStyle="italic" fontSize="18.5" textLength="59" lengthAdjust="spacingAndGlyphs">FLOW</text>
          <circle cx="8.5" cy="8.5" r="6.5" fill="#12a84e" />
          <path d="M8.5 4L4.8 8h2.1v4.5h3.2V8h2.1z" fill="#10231b" />
        </Logo>
        <Shortcuts>
          {SHORTCUTS.map(([label, tone]) => (
            <Shortcut key={label} $tone={tone}>
              <span>{label}</span>
            </Shortcut>
          ))}
        </Shortcuts>
        <Spacer />
        <Cell $width={31}><Icon name="bell" size={8} /></Cell>
        <Cell $width={31}><Icon name="padlock" size={9} /></Cell>
        <Cell $width={32}><Icon name="save" size={10} /></Cell>
        <Connection $width={50}>
          <Dot $color="#1fc32c" />
          <Stack>
            Rithmic
            <Small>RTT: 21 ms</Small>
          </Stack>
        </Connection>
        <Connection $width={78}>
          <Dot $color="#47505a" />
          <Stack>
            Rithmic Delayed
            <Small $dim>Disconnected</Small>
          </Stack>
        </Connection>
        <Cell $width={31}><Icon name="chat" size={10} /></Cell>
        <Cell $width={31}><Icon name="gear" size={11} /></Cell>
        <Cell $width={61}>
          <Stack $center>
            12:04:52 PM
            <Small>Local</Small>
          </Stack>
        </Cell>
        <Cell $width={31}><Icon name="help" size={11} /></Cell>
        <Cell $width={33} $color="#16b05a"><Icon name="user" size={11} /></Cell>
        <Cluster>
          <Icon name="cart" size={8} />
          <Icon name="bag" size={8} />
          <Icon name="agent" size={9} />
          <Green><Icon name="refresh" size={8} /></Green>
        </Cluster>
        <Cell $width={20}><Icon name="minus" size={8} /></Cell>
        <Cell $width={15}><Icon name="close" size={9} /></Cell>
      </TopBar>

      <Window>
        <TitleRow>
          <Icon name="menu" size={6} />
          <WindowTitle>Chart YM Time - 1H</WindowTitle>
          <Powered>
            <RithmicMark />
            <b>Rithmic</b>
            <em>- Market Data-Trading Infrastructure</em>
            <OmneMark />
            Powered by OMNE™
          </Powered>
          <Spacer />
          <WindowButtons>
            <Icon name="full" size={7} />
            <Icon name="low" size={7} />
            <Icon name="restore" size={7} />
            <Icon name="close" size={6} />
          </WindowButtons>
        </TitleRow>
        <ToolRow>
          <ToolButton $active><Icon name="panelLeft" /></ToolButton>
          <Field $width={122.5} $dark>
            <span>YM <small>Rithmic</small></span>
            <Icon name="dots" size={7} />
          </Field>
          <Field $width={91}>Time - 1H<Icon name="caret" size={7} /></Field>
          <Field $width={60}>3 month<Icon name="caret" size={7} /></Field>
          <Field $width={60}>Candle<Icon name="caret" size={7} /></Field>
          <RightTools>
            <ToolButton><Icon name="search" size={10} /></ToolButton>
            <ToolDivider />
            <ToolButton><Icon name="table" size={10} /></ToolButton>
            <ToolButton><Icon name="mouse" /></ToolButton>
            <ToolButton><Icon name="tags" size={10} /></ToolButton>
            <ToolButton><Icon name="calendar" size={8} /></ToolButton>
            <ToolDivider />
            <ToolButton><Icon name="panelRight" /></ToolButton>
          </RightTools>
        </ToolRow>

        <Content>
          <Rail>
            <RailGroup $top={4}>
              {['bars', 'layers', 'bell', 'wand'].map(name => (
                <ToolButton key={name}><Icon name={name} size={8} /></ToolButton>
              ))}
            </RailGroup>
            <RailGroup $top={3}>
              {['hlineDot', 'line', 'rect', 'channel', 'fib'].map(name => (
                <ToolButton key={name}><Icon name={name} /></ToolButton>
              ))}
            </RailGroup>
            <Spacer />
            <RailGroup $top={3} $bottom={4}>
              <ToolButton><Icon name="undo" size={7} /></ToolButton>
              <ToolButton $dim><Icon name="redo" size={7} /></ToolButton>
            </RailGroup>
            <RailGroup $top={3}><ToolButton><Icon name="eye" /></ToolButton></RailGroup>
            <RailGroup $top={3}><ToolButton><Icon name="trash" size={8} /></ToolButton></RailGroup>
            <RailGroup $top={3} $bottom={4}><ToolButton><Icon name="list" size={7} /></ToolButton></RailGroup>
          </Rail>
          <Panel>
            {TOOLS.map((group, g) => (
              <React.Fragment key={group.name}>
                <GroupName>{group.name}</GroupName>
                <Group>
                  {group.items.map((item, i) => (
                    <Item key={item.label} $selected={g === 0 && i === 0}>
                      <Icon name={item.icon} size={9} />
                      <ItemLabel>{item.label}</ItemLabel>
                      {item.star && (
                        <Star $dim={g === 0 && i === 0}><Icon name="star" size={9} /></Star>
                      )}
                    </Item>
                  ))}
                </Group>
              </React.Fragment>
            ))}
          </Panel>
          <PanelScroll><i /></PanelScroll>
          <ChartArea>
            <Chart />
            <PriceAxis>
              <Auto>AUTO</Auto>
              {prices.map(price => (
                <PriceLabel key={price}>{price.toLocaleString('en-US')}</PriceLabel>
              ))}
              <LastPrice>33,239</LastPrice>
            </PriceAxis>
            <Quote>
              {QUOTE.map(([label, value, width], i) => (
                <QuoteItem key={i} $width={width}>{label} <b>{value}</b></QuoteItem>
              ))}
            </Quote>
            <Callout>
              <span>Access Hundreds of Indicators and Drawing Tools Like</span>
              <span>This Head &amp; Shoulders or Create Your Own</span>
            </Callout>
            <DrawingBar>
              <Grip />
              <Icon name="thickness" size={10} />
              <Icon name="dashes" size={10} />
              <Swatch $color="#fff200" />
              <Swatch $color="#277060" />
              <Icon name="copy" size={10} />
              <Icon name="order" size={10} />
              <Icon name="lock" size={10} />
              <Icon name="gear" size={10} />
              <Icon name="trash" size={10} />
            </DrawingBar>
            <ZoomButtons>
              <Icon name="minus" size={8} />
              <Icon name="plus" size={8} />
            </ZoomButtons>
          </ChartArea>
        </Content>
      </Window>
    </Screen>
  );
};

export default App;
